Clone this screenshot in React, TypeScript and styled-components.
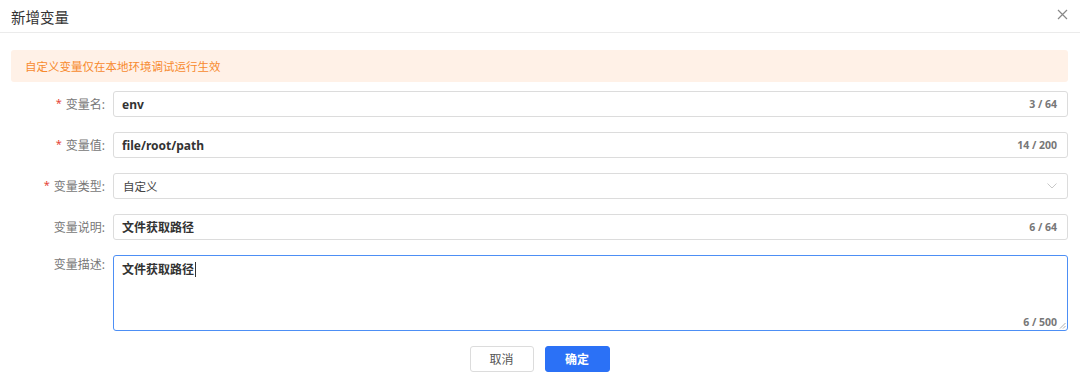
import styled, { createGlobalStyle } from 'styled-components';
import { useState } from 'react';

const GlobalStyle = createGlobalStyle`
    * {
        box-sizing: border-box;
    }
    body {
        margin: 0;
        background: #fff;
        font-family: "Noto Sans", "Noto Sans CJK SC", sans-serif;
        color: #333;
    }
`;

const App = () => {
    const [name] = useState('env');
    const [value] = useState('file/root/path');
    const [desc] = useState('文件获取路径');
    const [detail] = useState('文件获取路径');

    return (
        <>
            <GlobalStyle />
            <Dialog>
                <Header>
                    <Title>新增变量</Title>
                    <CloseButton aria-label="close">
                        <svg width="11" height="11" viewBox="0 0 11 11">
                            <path d="M1 1L10 10M10 1L1 10" stroke="#888" strokeWidth="1.2" />
                        </svg>
                    </CloseButton>
                </Header>
                <Body>
                    <Alert>自定义变量仅在本地环境调试运行生效</Alert>
                    <Form>
                        <Row>
                            <Label required>变量名:</Label>
                            <InputBox>
                                <Value>{name}</Value>
                                <Count>{name.length} / 64</Count>
                            </InputBox>
                        </Row>
                        <Row>
                            <Label required>变量值:</Label>
                            <InputBox>
                                <Value>{value}</Value>
                                <Count>{value.length} / 200</Count>
                            </InputBox>
                        </Row>
                        <Row>
                            <Label required>变量类型:</Label>
                            <InputBox>
                                <SelectValue>自定义</SelectValue>
                                <svg width="10" height="6" viewBox="0 0 10 6">
                                    <path d="M0.5 0.5L5 5L9.5 0.5" fill="none" stroke="#c8c8c8" strokeWidth="1" />
                                </svg>
                            </InputBox>
                        </Row>
                        <Row>
                            <Label>变量说明:</Label>
                            <InputBox>
                                <Value>{desc}</Value>
                                <Count>{desc.length} / 64</Count>
                            </InputBox>
                        </Row>
                        <Row top>
                            <Label>变量描述:</Label>
                            <TextArea>
                                <Value>
                                    {detail}
                                    <Caret />
                                </Value>
                                <AreaCount>{detail.length} / 500</AreaCount>
                                <Grip width="7" height="7" viewBox="0 0 7 7">
                                    <path d="M6.5 1L1 6.5M6.5 4L4 6.5" stroke="#999" strokeWidth="0.8" />
                                </Grip>
                            </TextArea>
                        </Row>
                    </Form>
                    <Footer>
                        <Button>取消</Button>
                        <Button primary>确定</Button>
                    </Footer>
                </Body>
            </Dialog>
        </>
    );
};

export default App;

const Dialog = styled.div`
    width: 1080px;
    height: 381px;
    background: #fff;
    overflow: hidden;
`;

const Header = styled.div`
    display: flex;
    align-items: center;
    justify-content: space-between;
    height: 33px;
    padding: 0 11px;
    border-bottom: 1px solid #ebebeb;
`;

const Title = styled.div`
    font-size: 14.5px;
    color: #333;
    margin-top: 0;
`;

const CloseButton = styled.div`
    display: flex;
    margin-right: 1px;
    margin-top: -3px;
`;

const Body = styled.div`
    padding: 17px 12px 0 11px;
`;

const Alert = styled.div`
    height: 32px;
    display: flex;
    align-items: center;
    padding-left: 14px;
    background: #fff1e7;
    border-radius: 3px;
    color: #f78a2e;
    font-size: 11.5px;
`;

const Form = styled.div`
    display: flex;
    flex-direction: column;
    gap: 15px;
    margin-top: 9px;
`;

const Row = styled.div<{ top?: boolean }>`
    display: flex;
    align-items: ${(props) => (props.top ? 'flex-start' : 'center')};
`;

const Label = styled.div<{ required?: boolean }>`
    width: 94px;
    flex: none;
    margin-right: 8px;
    text-align: right;
    font-size: 12px;
    color: #777;

    &::before {
        content: ${(props) => (props.required ? "'*'" : "''")};
        color: #e5453a;
        margin-right: 4px;
        font-size: 11px;
        position: relative;
        top: -2px;
    }
`;

const InputBox = styled.div`
    flex: 1;
    height: 26px;
    display: flex;
    align-items: center;
    justify-content: space-between;
    padding: 0 10px 0 8px;
    border: 1px solid #dcdcdc;
    border-radius: 3px;
`;

const Value = styled.div`
    font-size: 12px;
    font-weight: 700;
    color: #333;
    display: flex;
    align-items: center;
`;

const SelectValue = styled.div`
    font-size: 11.5px;
    color: #444;
    padding-left: 1px;
`;

const Count = styled.div`
    font-size: 10.5px;
    font-weight: 700;
    color: #777;
`;

const TextArea = styled.div`
    position: relative;
    flex: 1;
    height: 76px;
    padding: 4px 8px;
    border: 1px solid #4d8ff5;
    border-radius: 3px;
`;

const Caret = styled.span`
    display: inline-block;
    width: 1px;
    height: 15px;
    background: #333;
    margin-left: 1px;
`;

const AreaCount = styled(Count)`
    position: absolute;
    right: 10px;
    bottom: 1px;
`;

const Grip = styled.svg`
    position: absolute;
    right: 1px;
    bottom: 1px;
`;

const Footer = styled.div`
    display: flex;
    justify-content: center;
    gap: 11px;
    margin-top: 15px;
`;

const Button = styled.div<{ primary?: boolean }>`
    width: ${(props) => (props.primary ? '65px' : '64px')};
    height: 26px;
    display: flex;
    align-items: center;
    justify-content: center;
    font-size: 12px;
    border-radius: 3px;
    border: 1px solid ${(props) => (props.primary ? '#2b71f6' : '#dcdcdc')};
    background: ${(props) => (props.primary ? '#2b71f6' : '#fff')};
    color: ${(props) => (props.primary ? '#fff' : '#555')};
    font-weight: ${(props) => (props.primary ? 700 : 400)};
`;
